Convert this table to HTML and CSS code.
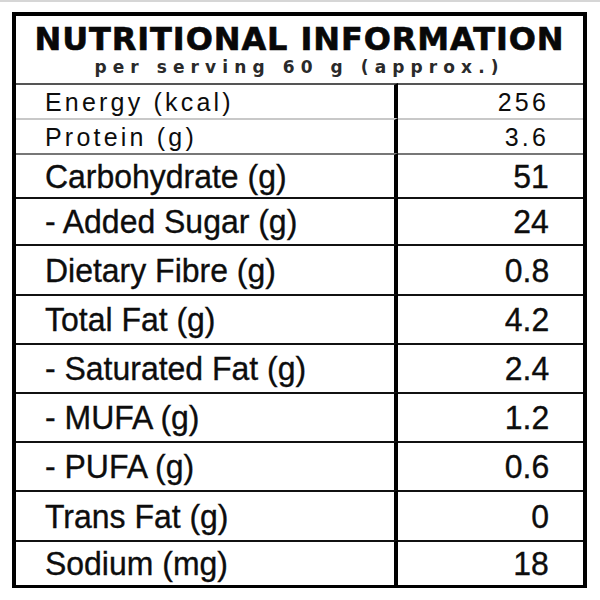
FILE: index.html
```html
<!DOCTYPE html>
<html lang="en">
<head>
<meta charset="utf-8">
<title>Nutritional Information</title>
<link rel="stylesheet" href="styles.css">
</head>
<body>
<div class="page">
  <div class="label">
    <div class="head">
      <div class="title">NUTRITIONAL INFORMATION</div>
      <div class="sub">per serving 60 g (approx.)</div>
    </div>
    <div class="k small light"><span>Energy (kcal)</span></div>
    <div class="v small light"><span>256</span></div>
    <div class="k small light2"><span>Protein (g)</span></div>
    <div class="v small light2"><span>3.6</span></div>
    <div class="k mid"><span>Carbohydrate (g)</span></div>
    <div class="v mid"><span>51</span></div>
    <div class="k"><span>- Added Sugar (g)</span></div>
    <div class="v"><span>24</span></div>
    <div class="k"><span>Dietary Fibre (g)</span></div>
    <div class="v"><span>0.8</span></div>
    <div class="k"><span>Total Fat (g)</span></div>
    <div class="v"><span>4.2</span></div>
    <div class="k"><span>- Saturated Fat (g)</span></div>
    <div class="v"><span>2.4</span></div>
    <div class="k"><span>- MUFA (g)</span></div>
    <div class="v"><span>1.2</span></div>
    <div class="k"><span>- PUFA (g)</span></div>
    <div class="v"><span>0.6</span></div>
    <div class="k"><span>Trans Fat (g)</span></div>
    <div class="v"><span>0</span></div>
    <div class="k"><span>Sodium (mg)</span></div>
    <div class="v"><span>18</span></div>
  </div>
</div>
</body>
</html>
```
FILE: styles.css
```css
html, body {
  margin: 0;
  padding: 0;
  background: #fff;
}
body {
  border-top: 2px solid #d6d6d6;
}
.page {
  padding: 10px 0 0 12px;
}
.label {
  width: 575px;
  height: 576px;
  box-sizing: border-box;
  border: 4px solid #000;
  border-bottom-width: 3px;
  display: grid;
  grid-template-columns: 382px 1fr;
  grid-template-rows: 67px 35px 35px 44px 47px 50px 49px 49px 49px 49px 50px 45px;
  font-family: "Liberation Sans", Arial, sans-serif;
  color: #0d0d0d;
}
.head {
  grid-column: 1 / 3;
  display: flex;
  flex-direction: column;
  align-items: center;
  padding-top: 9px;
}
.title {
  font-family: "DejaVu Sans", sans-serif;
  font-weight: bold;
  font-size: 32px;
  line-height: 28px;
  letter-spacing: 0.9px;
  color: #080808;
  -webkit-text-stroke: 0.6px #080808;
}
.sub {
  font-family: "DejaVu Sans", sans-serif;
  font-weight: bold;
  font-size: 17px;
  line-height: 17px;
  letter-spacing: 6.1px;
  color: #2a2a2a;
  margin-top: 6px;
}
.k, .v {
  border-top: 2px solid #111;
  display: flex;
  align-items: center;
  font-size: 34px;
  -webkit-text-stroke: 0.35px #0d0d0d;
}
.k span, .v span {
  display: inline-block;
  transform: scaleX(0.94);
}
.k span {
  transform-origin: left center;
}
.v span {
  transform-origin: right center;
}
.k {
  border-right: 4px solid #000;
  padding-left: 29px;
}
.v {
  justify-content: flex-end;
  padding-right: 34px;
}
.small {
  font-size: 25px;
  letter-spacing: 3.2px;
  -webkit-text-stroke: 0;
}
.k.small span, .v.small span {
  transform: translateY(1px);
}
.light {
  border-top-color: #555;
}
.light2 {
  border-top-color: #c8c8c8;
}
.mid {
  border-top-color: #777;
}
```
